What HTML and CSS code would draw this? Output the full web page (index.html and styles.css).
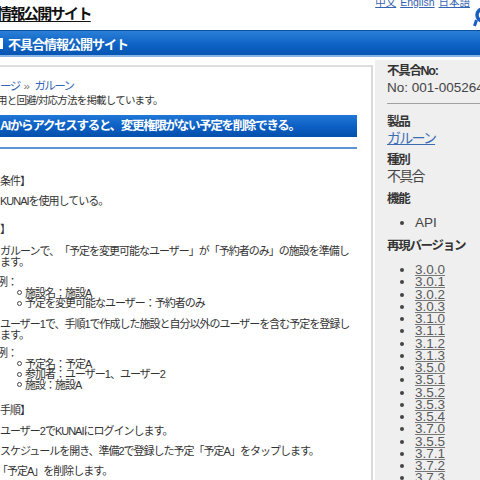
FILE: index.html
```html
<!DOCTYPE html>
<html lang="ja">
<head>
<meta charset="utf-8">
<title>不具合情報公開サイト</title>
<link rel="stylesheet" href="styles.css">
</head>
<body>
<div class="page">
  <header class="top">
    <a class="site-title" href="#">情報公開サイト</a>
    <div class="top-right">
      <nav class="langs"><a href="#">中文</a> <a href="#">English</a> <a href="#">日本語</a></nav>
      <svg class="logo" width="8" height="20" viewBox="0 0 8 20"><circle cx="11" cy="8" r="6" fill="none" stroke="#1a5fc0" stroke-width="3.5"/><path d="M4.5 13 L2.5 19" stroke="#1a5fc0" stroke-width="3" fill="none"/></svg>
    </div>
  </header>
  <div class="bluebar"><span class="mark"></span><span class="bar-title">不具合情報公開サイト</span></div>
  <div class="content">
    <main class="main">
      <div class="crumb"><a href="#">ージ</a><span class="raquo">»</span><a href="#">ガルーン</a></div>
      <p class="desc">用と回避/対応方法を掲載しています。</p>
      <h2 class="issue-title">AIからアクセスすると、変更権限がない予定を削除できる。</h2>
      <div class="rule"></div>

      <div class="t first">条件】</div>
      <div class="t g9">KUNAIを使用している。</div>
      <div class="t g17">】</div>
      <div class="t g11">ガルーンで、「予定を変更可能なユーザー」が「予約者のみ」の施設を準備します。</div>
      <div class="t g9 cut">例：</div>
      <ul class="sub">
        <li>施設名：施設A</li>
        <li>予定を変更可能なユーザー：予約者のみ</li>
      </ul>
      <div class="t g10">ユーザー1で、手順1で作成した施設と自分以外のユーザーを含む予定を登録します。</div>
      <div class="t g7 cut">例：</div>
      <ul class="sub">
        <li>予定名：予定A</li>
        <li>参加者：ユーザー1、ユーザー2</li>
        <li>施設：施設A</li>
      </ul>
      <div class="t g14">手順】</div>
      <div class="t g10">ユーザー2でKUNAIにログインします。</div>
      <div class="t g9">スケジュールを開き、準備2で登録した予定「予定A」をタップします。</div>
      <div class="t g9 cut">「予定A」を削除します。</div>
    </main>
    <aside class="side">
      <div class="lbl">不具合No:</div>
      <div class="val">No: 001-005264</div>
      <hr class="sep">
      <div class="lbl m10">製品</div>
      <div class="val"><a class="prod" href="#">ガルーン</a></div>
      <div class="lbl m5">種別</div>
      <div class="val jp">不具合</div>
      <div class="lbl m6">機能</div>
      <ul class="feat">
        <li>API</li>
      </ul>
      <div class="lbl m7">再現バージョン</div>
      <ul class="vers">
        <li><a class="ver" href="#">3.0.0</a></li>
        <li><a class="ver" href="#">3.0.1</a></li>
        <li><a class="ver" href="#">3.0.2</a></li>
        <li><a class="ver" href="#">3.0.3</a></li>
        <li><a class="ver" href="#">3.1.0</a></li>
        <li><a class="ver" href="#">3.1.1</a></li>
        <li><a class="ver" href="#">3.1.2</a></li>
        <li><a class="ver" href="#">3.1.3</a></li>
        <li><a class="ver" href="#">3.5.0</a></li>
        <li><a class="ver" href="#">3.5.1</a></li>
        <li><a class="ver" href="#">3.5.2</a></li>
        <li><a class="ver" href="#">3.5.3</a></li>
        <li><a class="ver" href="#">3.5.4</a></li>
        <li><a class="ver" href="#">3.7.0</a></li>
        <li><a class="ver" href="#">3.5.5</a></li>
        <li><a class="ver" href="#">3.7.1</a></li>
        <li><a class="ver" href="#">3.7.2</a></li>
        <li><a class="ver" href="#">3.7.3</a></li>
      </ul>
    </aside>
  </div>
</div>
</body>
</html>
```
FILE: styles.css
```css
html, body {
  margin: 0;
  padding: 0;
  background: #fff;
  overflow: hidden;
}
body {
  font-family: "Liberation Sans", "Noto Sans CJK JP", sans-serif;
  color: #333;
  text-spacing-trim: space-all;
}
.page {
  width: 480px;
  height: 480px;
  overflow: hidden;
}

/* header */
.top {
  display: flex;
  justify-content: space-between;
  height: 30px;
}
.site-title {
  margin: 4px 0 0 -3px;
  font-size: 15px;
  line-height: 20px;
  font-weight: bold;
  letter-spacing: -1.6px;
  color: #111;
  text-decoration: underline;
  text-underline-offset: 2px;
  height: 20px;
}
.top-right {
  display: flex;
  flex-direction: column;
  align-items: flex-end;
}
.langs {
  margin: -4px 10px 0 0;
  font-size: 10.5px;
  line-height: 12px;
  word-spacing: 1px;
}
.langs a {
  color: #3563b0;
  text-decoration: underline;
}
.logo {
  display: block;
  margin-top: -1px;
}

/* blue bar */
.bluebar {
  height: 24px;
  border-top: 1px solid #0b4e9c;
  border-bottom: 2px solid #86b6e6;
  background: linear-gradient(#2a7fd8, #0f63c4 55%, #0455b2);
  display: flex;
  align-items: center;
}
.mark {
  width: 3px;
  height: 11px;
  background: #fff;
  margin-right: 5px;
}
.bar-title {
  color: #fff;
  font-weight: bold;
  font-size: 13px;
  letter-spacing: -1px;
}

/* content */
.content {
  display: flex;
  align-items: flex-start;
  background: #fff;
}
.main {
  width: 357px;
  flex: none;
  padding: 12px 14px 0 0;
  margin-top: 8px;
  border-top: 2px solid #dedede;
  border-right: 2px solid #dadada;
  height: 500px;
}
.crumb {
  font-size: 11.5px;
  line-height: 14px;
  letter-spacing: -1.6px;
  color: #3565b4;
}
.crumb a {
  color: #3565b4;
  text-decoration: none;
}
.raquo {
  color: #777;
  margin: 0 6px 0 4px;
}
.desc {
  margin: 0 0 0 -3px;
  font-size: 10.5px;
  line-height: 14px;
  letter-spacing: -0.8px;
  color: #333;
}
.issue-title {
  margin: 8px 0 0;
  height: 22px;
  line-height: 22px;
  font-size: 12.5px;
  font-weight: bold;
  letter-spacing: -1.3px;
  color: #fff;
  background: linear-gradient(#2077d6, #0b5ec2 55%, #0350ab);
  white-space: nowrap;
  overflow: hidden;
}
.rule {
  margin-top: 10px;
  height: 2px;
  background: #5d95d4;
}
.t {
  font-size: 11px;
  line-height: 11px;
  letter-spacing: -1px;
  color: #333;
}
.first { margin-top: 26.5px; }
.g7 { margin-top: 7px; }
.g9 { margin-top: 9px; }
.g10 { margin-top: 10px; }
.g11 { margin-top: 11px; }
.g14 { margin-top: 14.5px; }
.g17 { margin-top: 17px; }
.cut { margin-left: -3px; }
.sub {
  list-style: none;
  margin: 0;
  padding: 0 0 0 25px;
  font-size: 11px;
  line-height: 10.5px;
  letter-spacing: -1px;
  color: #333;
}
.sub li {
  display: flex;
  align-items: center;
  height: 10.5px;
}
.sub li::before {
  content: "";
  flex: none;
  width: 3px;
  height: 3px;
  border: 1px solid #444;
  border-radius: 50%;
  margin: 0 3px 0 -8px;
}

/* sidebar */
.side {
  flex: 1;
  margin: 3px 0 0 2px;
  padding: 3px 0 0 12px;
  background: #efefef;
  height: 480px;
}
.lbl {
  font-size: 12.5px;
  line-height: 16px;
  font-weight: bold;
  letter-spacing: -1.3px;
  color: #333;
}
.val {
  font-size: 13.5px;
  line-height: 17px;
  color: #444;
  white-space: nowrap;
}
.val.jp, .prod {
  font-size: 14px;
  letter-spacing: -1.8px;
}
.prod {
  color: #3b6db5;
  text-decoration: underline;
}
.sep {
  margin: 7px 0 0;
  border: 0;
  border-top: 1px solid #a0a0a0;
  height: 0;
}
.m10 { margin-top: 10px; }
.m5 { margin-top: 5px; }
.m6 { margin-top: 6px; }
.m7 { margin-top: 7.5px; }
.feat, .vers {
  margin: 0;
  padding-left: 28px;
  list-style: disc;
  color: #444;
  font-size: 13.5px;
}
.feat {
  margin-top: 6.5px;
  line-height: 17px;
}
.vers {
  margin-top: 10px;
  line-height: 12.25px;
}
.ver {
  color: #5a5a5a;
  text-decoration: underline;
  text-decoration-color: #777;
}
```
